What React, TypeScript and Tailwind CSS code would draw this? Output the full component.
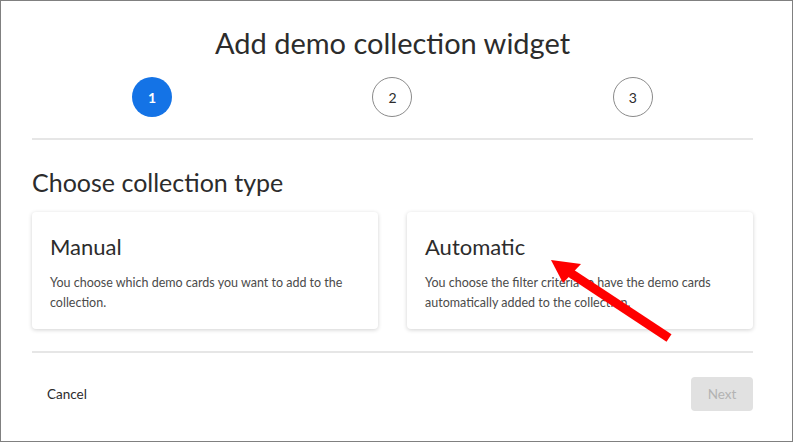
import React from 'react'

const font = { fontFamily: 'Lato, "Noto Sans", sans-serif' }

const steps = [1, 2, 3]

const cards = [
  {
    title: 'Manual',
    text: 'You choose which demo cards you want to add to the collection.',
  },
  {
    title: 'Automatic',
    text: 'You choose the filter criteria to have the demo cards automatically added to the collection.',
  },
]

function Step({ n, active }: { n: number; active?: boolean }) {
  return (
    <div className="flex justify-center">
      {active ? (
        <div className="flex h-[40px] w-[40px] items-center justify-center rounded-full bg-[#1473e6] text-[14px] font-bold text-white">
          {n}
        </div>
      ) : (
        <div className="flex h-[40px] w-[40px] items-center justify-center rounded-full border-[1.5px] border-[#8a8a8a] bg-white text-[14px] text-[#2c2c2c]">
          {n}
        </div>
      )}
    </div>
  )
}

function Card({ title, text }: { title: string; text: string }) {
  return (
    <div className="h-[117px] rounded-[4px] bg-white px-[18px] pt-[21px] shadow-[0_1px_4px_rgba(0,0,0,0.18)]">
      <h3 className="text-[22px] leading-[28px] text-[#2c2c2c]">{title}</h3>
      <p className="mt-[12px] text-[12.5px] leading-[20px] text-[#4b4b4b]">{text}</p>
    </div>
  )
}

function Arrow() {
  return (
    <svg className="pointer-events-none absolute left-0 top-0" width="793" height="442" viewBox="0 0 793 442">
      <line x1="568" y1="271" x2="668" y2="337" stroke="#ff0000" strokeWidth="9" />
      <polygon points="550,259 580,263 562,282" fill="#ff0000" />
    </svg>
  )
}

export default function App() {
  return (
    <div
      className="relative h-[442px] w-[793px] overflow-hidden border border-[#808080] bg-white text-[#2c2c2c]"
      style={font}
    >
      <div className="pl-[31px] pr-[39px]">
        <h1 className="pt-[22px] text-center text-[29px] leading-[40px] text-[#2c2c2c]">
          Add demo collection widget
        </h1>
        <div className="mt-[14px] grid grid-cols-3">
          {steps.map((n) => (
            <Step key={n} n={n} active={n === 1} />
          ))}
        </div>
        <div className="mt-[21px] h-[2px] bg-[#e6e6e6]" />

        <h2 className="mt-[26px] text-[25px] leading-[32px] text-[#2c2c2c]">Choose collection type</h2>
        <div className="mt-[14px] grid grid-cols-2 gap-[29px]">
          {cards.map((c) => (
            <Card key={c.title} title={c.title} text={c.text} />
          ))}
        </div>
        <div className="mt-[22px] h-[2px] bg-[#e6e6e6]" />

        <div className="mt-[24px] flex items-center justify-between">
          <button className="ml-[15px] text-[13.5px] text-[#2c2c2c]">Cancel</button>
          <button className="h-[34px] w-[62px] rounded-[4px] bg-[#e1e1e1] text-[13.5px] text-[#b3b3b3]">
            Next
          </button>
        </div>
      </div>
      <Arrow />
    </div>
  )
}
